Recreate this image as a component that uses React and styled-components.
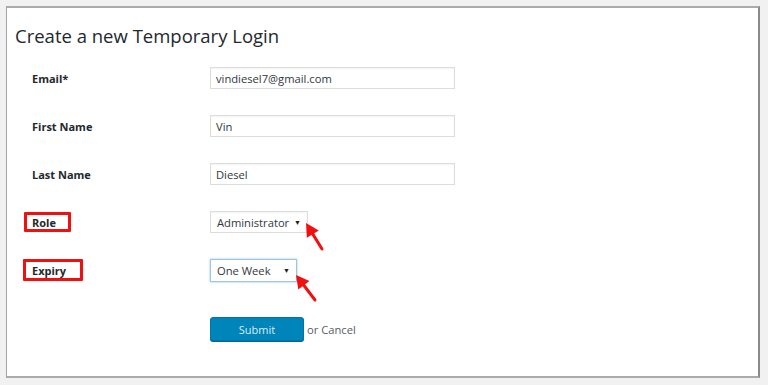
import React from 'react';
import styled, { createGlobalStyle } from 'styled-components';

const GlobalStyle = createGlobalStyle`
  html, body {
    margin: 0;
    padding: 0;
    background: #f1f1f1;
    font-family: "Open Sans", "Liberation Sans", sans-serif;
    color: #23282d;
  }
`;

const Page = styled.div`
  padding: 6px 8px 7px 6px;
  height: 385px;
  box-sizing: border-box;
`;

const Panel = styled.section`
  background: #fff;
  border-top: 2px solid #ababab;
  border-left: 1px solid #a4a4a4;
  border-right: 2px solid #8a8a8a;
  border-bottom: 2px solid #ababab;
  height: 100%;
  box-sizing: border-box;
  padding: 14px 0 0 8px;
`;

const Title = styled.h2`
  margin: 0 0 4px 0;
  font-size: 18.5px;
  font-weight: 400;
  line-height: 28px;
  color: #23282d;
`;

const Form = styled.div`
  display: grid;
  grid-template-columns: 178px 1fr;
  grid-auto-rows: 48px;
  padding-left: 17px;
`;

const Label = styled.div`
  position: relative;
  display: flex;
  align-items: center;
  font-size: 11px;
  font-weight: 700;
  color: #23282d;

  ${({ $box }) =>
    $box &&
    `
    &::before {
      content: '';
      position: absolute;
      left: ${$box.left}px;
      top: 50%;
      margin-top: ${-$box.h / 2}px;
      width: ${$box.w}px;
      height: ${$box.h}px;
      border: 3px solid #f01010;
      border-radius: 1px;
      box-sizing: border-box;
    }
  `}
`;

const Field = styled.div`
  position: relative;
  display: flex;
  align-items: center;
`;

const TextInput = styled.div`
  width: 245px;
  height: 22px;
  box-sizing: border-box;
  border: 1px solid #dddddd;
  box-shadow: inset 0 1px 2px rgba(0, 0, 0, 0.05);
  font-size: 11.2px;
  color: #32373c;
  padding: 0 5px;
  display: flex;
  align-items: center;
`;

const Select = styled.div`
  width: ${({ $w }) => $w}px;
  height: ${({ $focus }) => ($focus ? 23 : 22)}px;
  box-sizing: border-box;
  border: 1px solid ${({ $focus }) => ($focus ? '#9fc4e6' : '#dddddd')};
  box-shadow: ${({ $focus }) =>
    $focus ? '0 0 2px rgba(30, 140, 190, 0.5)' : 'inset 0 1px 2px rgba(0,0,0,0.05)'};
  font-size: 11.2px;
  color: #32373c;
  padding: 0 6px;
  display: flex;
  align-items: center;
  justify-content: space-between;
`;

const Caret = styled.span`
  font-size: 7px;
  color: #222;
`;

const Overlay = styled.svg`
  position: absolute;
  left: 0;
  top: 0;
  overflow: visible;
  pointer-events: none;
`;

const Actions = styled.div`
  display: flex;
  align-items: center;
  gap: 3px;
  margin-top: 23px;
  height: 24px;
`;

const Button = styled.button`
  width: 94px;
  height: 24px;
  background: #0085ba;
  border: 1px solid #0073aa;
  border-radius: 3px;
  box-shadow: 0 1px 0 #006799;
  color: #dcecf4;
  font-family: inherit;
  font-size: 11px;
  padding: 0;
`;

const Cancel = styled.span`
  font-size: 11.2px;
  color: #555d66;
`;

const RedArrow = ({ tip, tail }) => {
  const [tx, ty] = tip;
  const [ex, ey] = tail;
  const len = Math.hypot(ex - tx, ey - ty);
  const ux = (ex - tx) / len;
  const uy = (ey - ty) / len;
  const hl = 13;
  const hw = 7;
  const bx = tx + ux * hl;
  const by = ty + uy * hl;
  const pts = `${tx},${ty} ${bx - uy * hw},${by + ux * hw} ${bx + uy * hw},${by - ux * hw}`;
  return (
    <Overlay width="1" height="1">
      <line x1={bx - ux * 2} y1={by - uy * 2} x2={ex} y2={ey} stroke="#f01010" strokeWidth="3" strokeLinecap="round" />
      <polygon points={pts} fill="#f01010" />
    </Overlay>
  );
};

export default function App() {
  return (
    <>
      <GlobalStyle />
      <Page>
        <Panel>
          <Title>Create a new Temporary Login</Title>
          <Form>
            <Label>Email*</Label>
            <Field>
              <TextInput>vindiesel7@gmail.com</TextInput>
            </Field>

            <Label>First Name</Label>
            <Field>
              <TextInput>Vin</TextInput>
            </Field>

            <Label>Last Name</Label>
            <Field>
              <TextInput>Diesel</TextInput>
            </Field>

            <Label $box={{ left: -8, w: 47, h: 20 }}>Role</Label>
            <Field>
              <Select $w={98}>
                Administrator <Caret>▼</Caret>
              </Select>
              <RedArrow tip={[96, 25]} tail={[112, 51]} />
            </Field>

            <Label $box={{ left: -9, w: 60, h: 22 }}>Expiry</Label>
            <Field>
              <Select $w={87} $focus>
                One Week <Caret>▼</Caret>
              </Select>
              <RedArrow tip={[86, 29]} tail={[105, 54]} />
            </Field>

            <div />
            <Actions>
              <Button>Submit</Button>
              <Cancel>or Cancel</Cancel>
            </Actions>
          </Form>
        </Panel>
      </Page>
    </>
  );
}
